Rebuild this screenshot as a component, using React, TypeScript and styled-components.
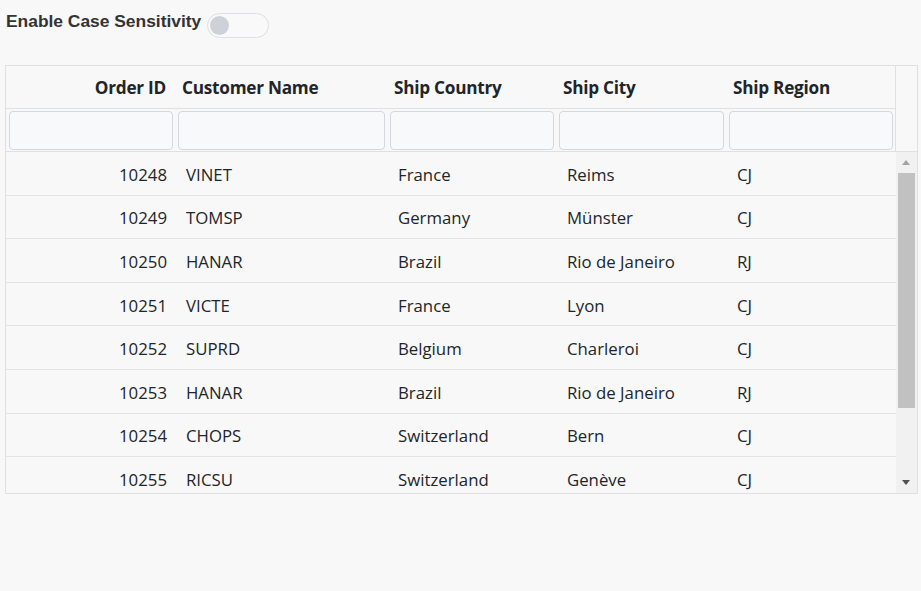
import styled, { createGlobalStyle } from 'styled-components';

const GlobalStyle = createGlobalStyle`
  html, body {
    margin: 0;
    background: #f8f8f8;
  }
  * {
    box-sizing: border-box;
  }
`;

const COLUMNS = '170px 212px 169px 170px 169px';

const Page = styled.div`
  width: 921px;
  height: 591px;
  padding: 12px 3px 0 5px;
  background: #f8f8f8;
`;

const ToggleRow = styled.div`
  display: flex;
  align-items: center;
  gap: 6px;
  height: 26px;
  padding-left: 1px;
`;

const ToggleLabel = styled.span`
  font-family: 'Liberation Sans', Arial, sans-serif;
  font-weight: bold;
  font-size: 17.4px;
  color: #333;
  margin-top: -8px;
`;

const Switch = styled.div`
  width: 62px;
  height: 25px;
  border: 1px solid #dcdfe3;
  border-radius: 13px;
  background: #f9f9f9;
  display: flex;
  align-items: center;
  padding-left: 2px;
`;

const Knob = styled.div`
  width: 19px;
  height: 19px;
  border-radius: 50%;
  background: #ced2d8;
`;

const Grid = styled.div`
  margin-top: 27px;
  width: 913px;
  border: 1px solid #e0e0e0;
  font-family: 'Open Sans', 'Noto Sans', sans-serif;
  color: #212529;
`;

const HeadArea = styled.div`
  display: flex;
  border-bottom: 1px solid #e0e0e0;
`;

const HeadColumns = styled.div`
  width: 890px;
  border-right: 1px solid #e0e0e0;
`;

const HeaderRow = styled.div`
  display: grid;
  grid-template-columns: ${COLUMNS};
  height: 43px;
  border-bottom: 1px solid #e0e0e0;
`;

const HeaderCell = styled.div<{ $right?: boolean }>`
  display: flex;
  align-items: center;
  justify-content: ${({ $right }) => ($right ? 'flex-end' : 'flex-start')};
  padding: ${({ $right }) => ($right ? '1px 10px 0 0' : '1px 0 0 6px')};
  font-weight: 700;
  font-size: 17.2px;
  letter-spacing: -0.25px;
`;

const FilterRow = styled.div`
  display: grid;
  grid-template-columns: ${COLUMNS};
  height: 42px;
  align-items: center;
`;

const FilterCell = styled.div`
  padding: 0 3px 0 2px;

  &:first-child {
    padding-left: 3px;
  }
`;

const FilterInput = styled.input`
  width: 100%;
  height: 39px;
  border: 1px solid #d3d8de;
  border-radius: 4px;
  background: #f8f9fa;
  display: block;
`;

const Body = styled.div`
  display: flex;
  height: 341px;
`;

const Rows = styled.div`
  width: 890px;
  overflow: hidden;
`;

const Row = styled.div`
  display: grid;
  grid-template-columns: ${COLUMNS};
  height: 43.6px;
  border-bottom: 1px solid #e3e3e3;
  font-size: 16.8px;
`;

const Cell = styled.div<{ $right?: boolean }>`
  display: flex;
  align-items: center;
  justify-content: ${({ $right }) => ($right ? 'flex-end' : 'flex-start')};
  padding: ${({ $right }) => ($right ? '2px 9px 0 0' : '2px 0 0 10px')};
`;

const ScrollTrack = styled.div`
  width: 21px;
  background: #f1f1f1;
  display: flex;
  flex-direction: column;
  align-items: center;
  padding: 0 2px 0 1px;
`;

const Arrow = styled.div<{ $down?: boolean; $dim?: boolean }>`
  height: 21px;
  width: 100%;
  display: flex;
  align-items: center;
  justify-content: center;

  &::after {
    content: '';
    border-left: 4px solid transparent;
    border-right: 4px solid transparent;
    ${({ $down, $dim }) =>
      $down
        ? `border-top: 5px solid ${$dim ? '#a3a3a3' : '#505050'};`
        : `border-bottom: 5px solid ${$dim ? '#a3a3a3' : '#505050'};`}
  }
`;

const Thumb = styled.div`
  width: 17px;
  height: 235px;
  background: #c1c1c1;
`;

const Spacer = styled.div`
  flex: 1;
`;

const orders = [
  ['10248', 'VINET', 'France', 'Reims', 'CJ'],
  ['10249', 'TOMSP', 'Germany', 'Münster', 'CJ'],
  ['10250', 'HANAR', 'Brazil', 'Rio de Janeiro', 'RJ'],
  ['10251', 'VICTE', 'France', 'Lyon', 'CJ'],
  ['10252', 'SUPRD', 'Belgium', 'Charleroi', 'CJ'],
  ['10253', 'HANAR', 'Brazil', 'Rio de Janeiro', 'RJ'],
  ['10254', 'CHOPS', 'Switzerland', 'Bern', 'CJ'],
  ['10255', 'RICSU', 'Switzerland', 'Genève', 'CJ'],
];

const headers = ['Order ID', 'Customer Name', 'Ship Country', 'Ship City', 'Ship Region'];

export default function App() {
  return (
    <Page>
      <GlobalStyle />
      <ToggleRow>
        <ToggleLabel>Enable Case Sensitivity</ToggleLabel>
        <Switch>
          <Knob />
        </Switch>
      </ToggleRow>

      <Grid>
        <HeadArea>
          <HeadColumns>
            <HeaderRow>
              {headers.map((h, i) => (
                <HeaderCell key={h} $right={i === 0}>
                  {h}
                </HeaderCell>
              ))}
            </HeaderRow>
            <FilterRow>
              {headers.map(h => (
                <FilterCell key={h}>
                  <FilterInput type="text" />
                </FilterCell>
              ))}
            </FilterRow>
          </HeadColumns>
        </HeadArea>

        <Body>
          <Rows>
            {orders.map(row => (
              <Row key={row[0]}>
                {row.map((v, i) => (
                  <Cell key={i} $right={i === 0}>
                    {v}
                  </Cell>
                ))}
              </Row>
            ))}
          </Rows>
          <ScrollTrack>
            <Arrow $dim />
            <Thumb />
            <Spacer />
            <Arrow $down />
          </ScrollTrack>
        </Body>
      </Grid>
    </Page>
  );
}
